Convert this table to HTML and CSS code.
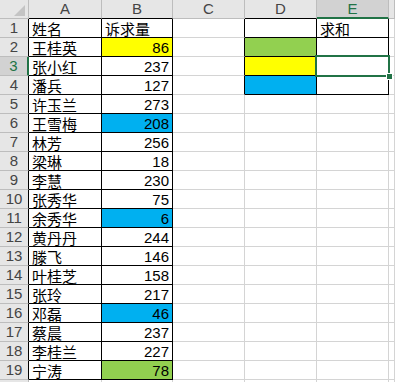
FILE: index.html
```html
<!DOCTYPE html>
<html>
<head>
<meta charset="utf-8">
<link rel="stylesheet" href="styles.css">
</head>
<body>
<div class="sheet">
  <div class="grid">
    <div class="h corner"><span class="tri"></span></div>
    <div class="h col kb">A</div>
    <div class="h col kb">B</div>
    <div class="h col">C</div>
    <div class="h col kb">D</div>
    <div class="h col sel-col">E</div>
    <div class="h col"></div>

    <div class="h row hk">1</div><div class="c k">姓名</div><div class="c k">诉求量</div><div class="c kr"></div><div class="c k"></div><div class="c k">求和</div><div class="c"></div>
    <div class="h row hk">2</div><div class="c k">王桂英</div><div class="c k n yellow">86</div><div class="c kr"></div><div class="c k green"></div><div class="c k"></div><div class="c"></div>
    <div class="h row hk sel-row">3</div><div class="c k">张小红</div><div class="c k n">237</div><div class="c kr"></div><div class="c k yellow"></div><div class="c k"></div><div class="c"></div>
    <div class="h row hk">4</div><div class="c k">潘兵</div><div class="c k n">127</div><div class="c kr"></div><div class="c k blue"></div><div class="c k"></div><div class="c"></div>
    <div class="h row hk">5</div><div class="c k">许玉兰</div><div class="c k n">273</div><div class="c"></div><div class="c"></div><div class="c"></div><div class="c"></div>
    <div class="h row hk">6</div><div class="c k">王雪梅</div><div class="c k n blue">208</div><div class="c"></div><div class="c"></div><div class="c"></div><div class="c"></div>
    <div class="h row hk">7</div><div class="c k">林芳</div><div class="c k n">256</div><div class="c"></div><div class="c"></div><div class="c"></div><div class="c"></div>
    <div class="h row hk">8</div><div class="c k">梁琳</div><div class="c k n">18</div><div class="c"></div><div class="c"></div><div class="c"></div><div class="c"></div>
    <div class="h row hk">9</div><div class="c k">李慧</div><div class="c k n">230</div><div class="c"></div><div class="c"></div><div class="c"></div><div class="c"></div>
    <div class="h row hk">10</div><div class="c k">张秀华</div><div class="c k n">75</div><div class="c"></div><div class="c"></div><div class="c"></div><div class="c"></div>
    <div class="h row hk">11</div><div class="c k">余秀华</div><div class="c k n blue">6</div><div class="c"></div><div class="c"></div><div class="c"></div><div class="c"></div>
    <div class="h row hk">12</div><div class="c k">黄丹丹</div><div class="c k n">244</div><div class="c"></div><div class="c"></div><div class="c"></div><div class="c"></div>
    <div class="h row hk">13</div><div class="c k">滕飞</div><div class="c k n">146</div><div class="c"></div><div class="c"></div><div class="c"></div><div class="c"></div>
    <div class="h row hk">14</div><div class="c k">叶桂芝</div><div class="c k n">158</div><div class="c"></div><div class="c"></div><div class="c"></div><div class="c"></div>
    <div class="h row hk">15</div><div class="c k">张玲</div><div class="c k n">217</div><div class="c"></div><div class="c"></div><div class="c"></div><div class="c"></div>
    <div class="h row hk">16</div><div class="c k">邓磊</div><div class="c k n blue">46</div><div class="c"></div><div class="c"></div><div class="c"></div><div class="c"></div>
    <div class="h row hk">17</div><div class="c k">蔡晨</div><div class="c k n">237</div><div class="c"></div><div class="c"></div><div class="c"></div><div class="c"></div>
    <div class="h row hk">18</div><div class="c k">李桂兰</div><div class="c k n">227</div><div class="c"></div><div class="c"></div><div class="c"></div><div class="c"></div>
    <div class="h row hk">19</div><div class="c k">宁涛</div><div class="c k n green">78</div><div class="c"></div><div class="c"></div><div class="c"></div><div class="c"></div>
    <div class="h row"></div><div class="c"></div><div class="c"></div><div class="c"></div><div class="c"></div><div class="c"></div><div class="c"></div>
  </div>
  <div class="selection"><span class="handle"></span></div>
</div>
</body>
</html>
```

FILE: styles.css
```css
html, body {
  margin: 0;
  padding: 0;
  background: #ffffff;
  overflow: hidden;
}

.sheet {
  position: relative;
  width: 395px;
  height: 382px;
  overflow: hidden;
}

.grid {
  display: grid;
  grid-template-columns: 29px 73px 71px 72px 72px 72px 1fr;
  grid-auto-rows: 19px;
}

.grid > div {
  box-sizing: border-box;
  border-right: 1px solid #d4d4d4;
  border-bottom: 1px solid #d4d4d4;
  overflow: hidden;
  white-space: nowrap;
}

.h {
  background: #e6e6e6;
  color: #444444;
  font-family: "Liberation Sans", Arial, sans-serif;
  font-size: 15px;
  line-height: 18px;
  text-align: center;
}

.grid > .h {
  border-right-color: #bdbdbd;
  border-bottom-color: #bdbdbd;
}

.corner {
  position: relative;
}

.tri {
  position: absolute;
  right: 3px;
  bottom: 2px;
  width: 0;
  height: 0;
  border-left: 11px solid transparent;
  border-bottom: 11px solid #c4c4c4;
}

.c {
  font-family: "Noto Sans CJK SC", "Liberation Sans", sans-serif;
  font-size: 15px;
  line-height: 19px;
  color: #000;
  padding-left: 3px;
}

.n {
  font-family: "Liberation Sans", Arial, sans-serif;
  font-size: 15px;
  line-height: 19px;
  text-align: right;
  padding-left: 0;
  padding-right: 3px;
}

.grid > .k {
  border-right-color: #000;
  border-bottom-color: #000;
}

.grid > .kr {
  border-right-color: #000;
}

.grid > .kb {
  border-bottom-color: #000;
}

.grid > .hk {
  border-right-color: #000;
}

.grid > .sel-col {
  background: #d2d2d2;
  color: #217346;
  border-bottom: 2px solid #217346;
}

.grid > .sel-row {
  background: #d2d2d2;
  color: #217346;
  border-right: 2px solid #217346;
}

.yellow { background: #ffff00; }
.green { background: #92d050; }
.blue { background: #00b0f0; }

.selection {
  position: absolute;
  left: 315px;
  top: 55px;
  width: 75px;
  height: 22px;
  box-sizing: border-box;
  border: 2px solid #217346;
}

.handle {
  position: absolute;
  right: -5px;
  bottom: -5px;
  width: 5px;
  height: 5px;
  background: #217346;
  border: 1px solid #ffffff;
}
```
